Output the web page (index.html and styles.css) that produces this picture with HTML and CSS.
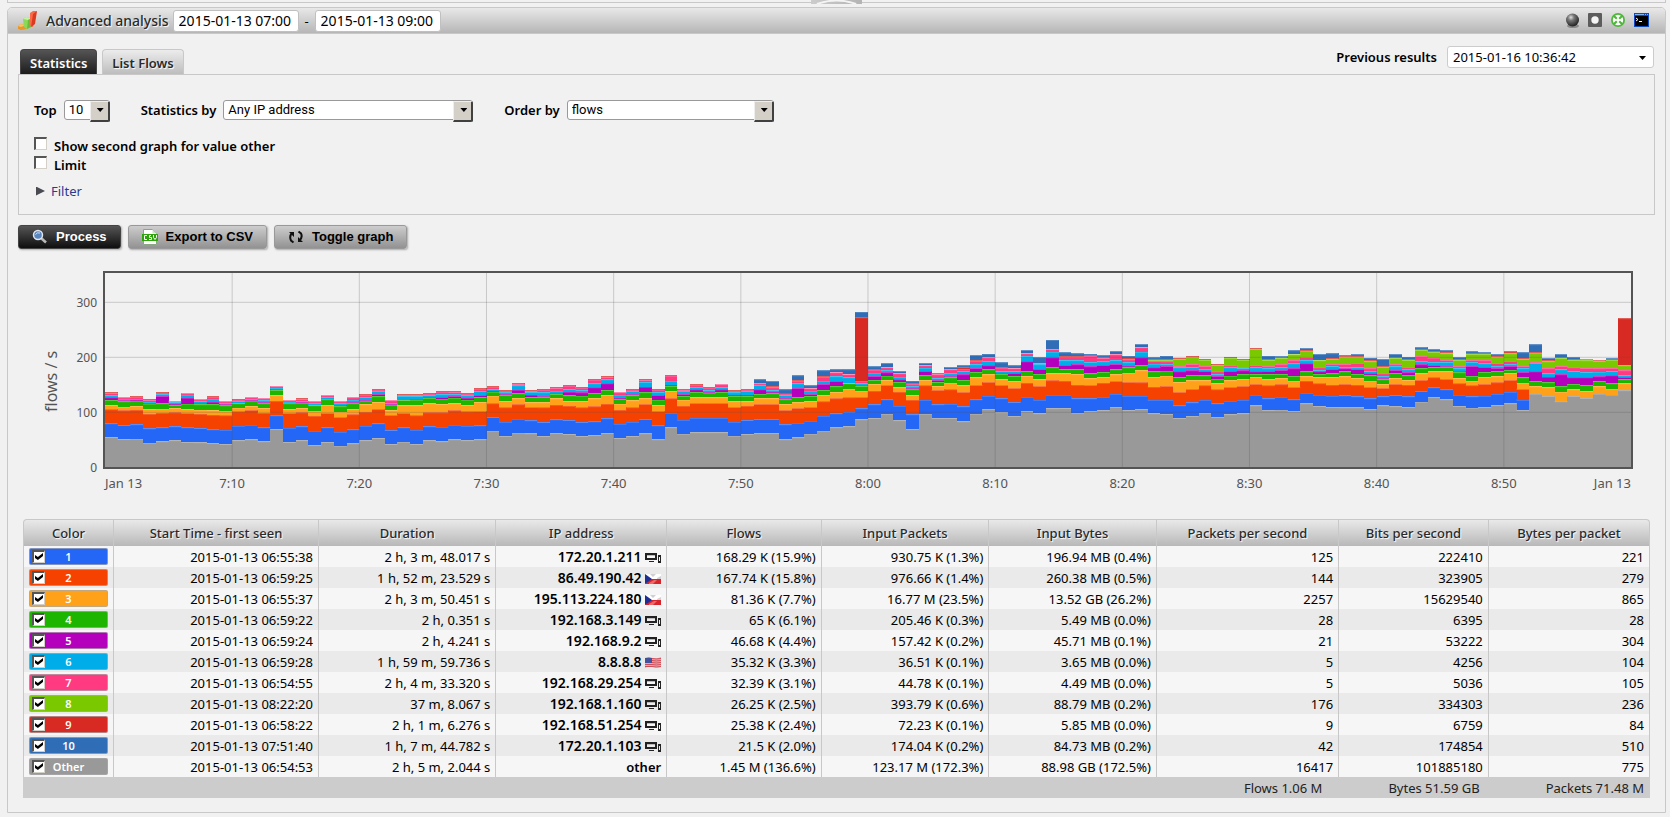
FILE: index.html
```html
<!DOCTYPE html>
<html lang="en">
<head>
<meta charset="utf-8">
<title>Advanced analysis</title>
<link rel="stylesheet" href="styles.css">
</head>
<body>
<svg class="sprite" aria-hidden="true">
  <symbol id="i-host" viewBox="0 0 16 11">
    <path fill="#222" fill-rule="evenodd" d="M0 1h12v7H0zM2 3v3h8V3zM4 9h5v1H4zM13 3h3v8h-3zM14 5v4h1V5z"/>
    <path fill="#bbb" d="M2 3h8v1H2z"/>
  </symbol>
  <symbol id="i-cz" viewBox="0 0 16 11">
    <path fill="#fff" d="M0 1h16v5H0z"/><path fill="#cfcfd4" d="M5 1h6l-3 3zM12 5l4-2v3h-4z"/>
    <path fill="#d8242b" d="M5 6h11v5H0z"/><path fill="#ee6a6a" d="M4 10l5-3h3l-4 4H4z"/>
    <path fill="#1c2f94" d="M0 1l7 5-7 5z"/>
  </symbol>
  <symbol id="i-us" viewBox="0 0 16 11">
    <path fill="#e9a9ae" d="M0 1q4-1 8 0t8-1v10q-4 1-8 0T0 11z"/>
    <path stroke="#cf4d58" fill="none" d="M7 1.500q4 1 9 0M7 3.500q4 1 9 0M7 5.500q4 1 9 0M0 7.500h7q4 1 9 0M0 9.500h7q4 1 9 0"/>
    <path fill="#42529d" d="M0 1q4-1 7 0v5H0z"/>
  </symbol>
</svg>

<div class="upper"><button class="handle" aria-label="Collapse"><svg viewBox="0 0 52 4"><path d="M6 4Q26-3 46 4" fill="none" stroke="#f4f4f4" stroke-width="2"/></svg></button></div>

<main class="window">
  <header class="titlebar">
    <svg class="logo" viewBox="0 0 20 20" aria-hidden="true">
      <path fill="#e9962a" d="M0 15l2-2 6 1 1 1v3l-6 1-3-1z"/><path fill="#f8c268" d="M0 15l2-2 6 1-5 2z"/>
      <path fill="#8cd95a" d="M5 8l3-2 6 1-1 9-4 2-3-2z"/><path fill="#c3f2a2" d="M5 8l3-2 6 1-4 2z"/><path fill="#6cbc3c" d="M10 9l4-2-1 9-4 2z"/>
      <path fill="#fa6a48" d="M12 2l3-2h4l-1 2-3 14-3-1z"/><path fill="#dc3a20" d="M15 3l4-3-2 13-4 3z"/>
    </svg>
    <h1>Advanced analysis</h1>
    <input class="date" type="text" value="2015-01-13 07:00" aria-label="From">
    <span class="dash">-</span>
    <input class="date" type="text" value="2015-01-13 09:00" aria-label="To">
    <nav class="tools">
      <button aria-label="Sphere"><svg viewBox="0 0 15 15"><defs><radialGradient id="ball" cx=".38" cy=".3" r=".7"><stop offset="0" stop-color="#ddd"/><stop offset=".35" stop-color="#777"/><stop offset="1" stop-color="#222"/></radialGradient></defs><ellipse cx="8" cy="13" rx="6" ry="2" fill="#888"/><circle cx="7.500" cy="7" r="6.500" fill="url(#ball)"/></svg></button>
      <button aria-label="Record"><svg viewBox="0 0 15 15"><rect x="0" y="0" width="14" height="14" rx="1" fill="#5c5c5c"/><circle cx="7" cy="7" r="3.700" fill="#f4f4f4"/></svg></button>
      <button aria-label="Target"><svg viewBox="0 0 15 15"><circle cx="7" cy="7" r="7" fill="#4fb83c"/><circle cx="7" cy="7" r="5.200" fill="#fff"/><path d="M3 3l2.800 2.800M11 3l-2.800 2.800M3 11l2.800-2.800M11 11l-2.800-2.800" stroke="#4fb83c" stroke-width="2.200"/></svg></button>
      <button aria-label="Console"><svg viewBox="0 0 15 15"><path fill="#0c4bc4" d="M0 0h15v14H0z"/><path fill="#7db4f5" d="M1 1h9v1H1zM11 1h1v1h-1zM13 1h1v1h-1z"/><path fill="#000" d="M1 3h13v10H1z"/><path d="M2 5l2 1.500L2 8M5 8.500h3" fill="none" stroke="#fff"/></svg></button>
    </nav>
  </header>

  <div class="content">
    <div class="topline">
      <div class="tabs" role="tablist">
        <button class="tab active" role="tab" aria-selected="true">Statistics</button>
        <button class="tab" role="tab" aria-selected="false">List Flows</button>
      </div>
      <div class="previous">
        <label for="prev">Previous results</label>
        <span class="pick flat"><select id="prev"><option>2015-01-16 10:36:42</option></select></span>
      </div>
    </div>

    <form class="options">
      <div class="fields">
        <label for="top">Top</label>
        <span class="pick w-top"><select id="top"><option>10</option></select></span>
        <label for="by">Statistics by</label>
        <span class="pick w-by"><select id="by"><option>Any IP address</option></select></span>
        <label for="order">Order by</label>
        <span class="pick w-order"><select id="order"><option>flows</option></select></span>
      </div>
      <label class="check"><input type="checkbox" class="box">Show second graph for value other</label>
      <label class="check"><input type="checkbox" class="box">Limit</label>
      <a class="filter" href="#filter">Filter</a>
    </form>

    <div class="actions">
      <button class="btn dark"><svg viewBox="0 0 16 16"><path d="M9 9l5 4.500" stroke="#b9b9b9" stroke-width="2.600"/><circle cx="6" cy="6" r="4.500" fill="#5b86bd" stroke="#dfe6ee" stroke-width="1.500"/><path d="M3.500 5.500Q5 3 8 4" stroke="#cfe2f8" fill="none"/></svg>Process</button>
      <button class="btn"><svg viewBox="0 0 16 16"><path fill="#fff" stroke="#8aa583" d="M1.500.5h9l4 4v11h-13z"/><path fill="#cfe3c8" d="M10.500.5v4h4z"/><path fill="#2fa40f" d="M0 5h16v7H0z"/><path fill="none" stroke="#fff" d="M5 6.500H2.500v4H5M9 6.500H7.500v2h2v2H7M11.500 6v2.500l1.500 2 1.500-2V6"/></svg>Export to CSV</button>
      <button class="btn"><svg viewBox="0 0 16 16"><path fill="none" stroke="#111" stroke-width="2" d="M4 4Q1 7.500 3 11.500L5.500 13.500M11 12Q15 8.500 13 4.500L10.500 2.500"/><path fill="#111" d="M1 3h5v5zM15 13h-5V8z"/></svg>Toggle graph</button>
    </div>

    <section class="chart" aria-label="Flows per second">
      <div class="ylabel">flows / s</div>
      <div class="yaxis"><span>300</span><span>200</span><span>100</span><span>0</span></div>
      <svg class="plot" id="plot" viewBox="0 39 120 582" preserveAspectRatio="none"></svg>
      <div class="xaxis"><span>Jan 13</span><span>7:10</span><span>7:20</span><span>7:30</span><span>7:40</span><span>7:50</span><span>8:00</span><span>8:10</span><span>8:20</span><span>8:30</span><span>8:40</span><span>8:50</span><span>Jan 13</span></div>
    </section>

    <table class="stats">
      <colgroup><col class="c1"><col class="c2"><col class="c3"><col class="c4"><col class="c5"><col class="c6"><col class="c7"><col class="c8"><col class="c9"><col class="c10"></colgroup>
      <thead><tr><th>Color</th><th>Start Time - first seen</th><th>Duration</th><th>IP address</th><th>Flows</th><th>Input Packets</th><th>Input Bytes</th><th>Packets per second</th><th>Bits per second</th><th>Bytes per packet</th></tr></thead>
      <tbody>
        <tr><td><label class="chip s1"><input type="checkbox" class="box" checked><span>1</span></label></td><td>2015-01-13 06:55:38</td><td>2 h, 3 m, 48.017 s</td><td class="ip">172.20.1.211 <svg><use href="#i-host"/></svg></td><td>168.29 K (15.9%)</td><td>930.75 K (1.3%)</td><td>196.94 MB (0.4%)</td><td>125</td><td>222410</td><td>221</td></tr>
        <tr><td><label class="chip s2"><input type="checkbox" class="box" checked><span>2</span></label></td><td>2015-01-13 06:59:25</td><td>1 h, 52 m, 23.529 s</td><td class="ip">86.49.190.42 <svg><use href="#i-cz"/></svg></td><td>167.74 K (15.8%)</td><td>976.66 K (1.4%)</td><td>260.38 MB (0.5%)</td><td>144</td><td>323905</td><td>279</td></tr>
        <tr><td><label class="chip s3"><input type="checkbox" class="box" checked><span>3</span></label></td><td>2015-01-13 06:55:37</td><td>2 h, 3 m, 50.451 s</td><td class="ip">195.113.224.180 <svg><use href="#i-cz"/></svg></td><td>81.36 K (7.7%)</td><td>16.77 M (23.5%)</td><td>13.52 GB (26.2%)</td><td>2257</td><td>15629540</td><td>865</td></tr>
        <tr><td><label class="chip s4"><input type="checkbox" class="box" checked><span>4</span></label></td><td>2015-01-13 06:59:22</td><td>2 h, 0.351 s</td><td class="ip">192.168.3.149 <svg><use href="#i-host"/></svg></td><td>65 K (6.1%)</td><td>205.46 K (0.3%)</td><td>5.49 MB (0.0%)</td><td>28</td><td>6395</td><td>28</td></tr>
        <tr><td><label class="chip s5"><input type="checkbox" class="box" checked><span>5</span></label></td><td>2015-01-13 06:59:24</td><td>2 h, 4.241 s</td><td class="ip">192.168.9.2 <svg><use href="#i-host"/></svg></td><td>46.68 K (4.4%)</td><td>157.42 K (0.2%)</td><td>45.71 MB (0.1%)</td><td>21</td><td>53222</td><td>304</td></tr>
        <tr><td><label class="chip s6"><input type="checkbox" class="box" checked><span>6</span></label></td><td>2015-01-13 06:59:28</td><td>1 h, 59 m, 59.736 s</td><td class="ip">8.8.8.8 <svg><use href="#i-us"/></svg></td><td>35.32 K (3.3%)</td><td>36.51 K (0.1%)</td><td>3.65 MB (0.0%)</td><td>5</td><td>4256</td><td>104</td></tr>
        <tr><td><label class="chip s7"><input type="checkbox" class="box" checked><span>7</span></label></td><td>2015-01-13 06:54:55</td><td>2 h, 4 m, 33.320 s</td><td class="ip">192.168.29.254 <svg><use href="#i-host"/></svg></td><td>32.39 K (3.1%)</td><td>44.78 K (0.1%)</td><td>4.49 MB (0.0%)</td><td>5</td><td>5036</td><td>105</td></tr>
        <tr><td><label class="chip s8"><input type="checkbox" class="box" checked><span>8</span></label></td><td>2015-01-13 08:22:20</td><td>37 m, 8.067 s</td><td class="ip">192.168.1.160 <svg><use href="#i-host"/></svg></td><td>26.25 K (2.5%)</td><td>393.79 K (0.6%)</td><td>88.79 MB (0.2%)</td><td>176</td><td>334303</td><td>236</td></tr>
        <tr><td><label class="chip s9"><input type="checkbox" class="box" checked><span>9</span></label></td><td>2015-01-13 06:58:22</td><td>2 h, 1 m, 6.276 s</td><td class="ip">192.168.51.254 <svg><use href="#i-host"/></svg></td><td>25.38 K (2.4%)</td><td>72.23 K (0.1%)</td><td>5.85 MB (0.0%)</td><td>9</td><td>6759</td><td>84</td></tr>
        <tr><td><label class="chip s10"><input type="checkbox" class="box" checked><span>10</span></label></td><td>2015-01-13 07:51:40</td><td>1 h, 7 m, 44.782 s</td><td class="ip">172.20.1.103 <svg><use href="#i-host"/></svg></td><td>21.5 K (2.0%)</td><td>174.04 K (0.2%)</td><td>84.73 MB (0.2%)</td><td>42</td><td>174854</td><td>510</td></tr>
        <tr><td><label class="chip s0"><input type="checkbox" class="box" checked><span>Other</span></label></td><td>2015-01-13 06:54:53</td><td>2 h, 5 m, 2.044 s</td><td class="other">other</td><td>1.45 M (136.6%)</td><td>123.17 M (172.3%)</td><td>88.98 GB (172.5%)</td><td>16417</td><td>101885180</td><td>775</td></tr>
      </tbody>
      <tfoot><tr><td colspan="10"><div class="totals"><span>Flows 1.06 M</span><span>Bytes 51.59 GB</span><span>Packets 71.48 M</span></div></td></tr></tfoot>
    </table>
  </div>
</main>
<script src="chart.js"></script>
</body>
</html>
```
FILE: styles.css
```css
* { box-sizing: border-box; }
body { margin: 0; background: #f1f1f1; color: #000; font: 13px/18px "Noto Sans", "Open Sans", sans-serif; }
button, input, select { font: inherit; color: inherit; margin: 0; }
button { border: 0; padding: 0; background: none; cursor: pointer; }
svg { display: block; }
.sprite { width: 0; height: 0; position: absolute; }

.upper { height: 3px; margin: 0 4px 4px 7px; border: solid #c8c8c8; border-width: 0 1px 1px; display: flex; justify-content: center; }
.handle { width: 51px; height: 4px; background: linear-gradient(90deg, #ccc, #b4b4b4); overflow: hidden; }
.handle svg { width: 51px; height: 4px; }

.window { margin: 0 4px 3px 7px; border: 1px solid #c8c8c8; border-radius: 5px 5px 0 0; }
.titlebar { display: flex; align-items: center; height: 26px; padding: 0 16px 0 10px; border-bottom: 1px solid #c8c8c8; border-radius: 4px 4px 0 0; background: linear-gradient(#e8e8e8, #b6b6b6); }
.logo { width: 20px; height: 20px; margin-right: 8px; }
h1 { margin: 0 4px 0 0; font-size: 14px; font-weight: 500; color: #2a2a2a; text-shadow: 1px 1px 1px #fff; }
.date { width: 126px; height: 22px; padding: 0 5px; border: 1px solid #c0c0c0; border-radius: 3px; background: #fff; font-size: 14px; }
.dash { width: 16px; text-align: center; }
.tools { display: flex; gap: 8px; margin-left: auto; }
.tools svg { width: 15px; height: 15px; }

.content { padding: 12px 10px 14px; }
.topline { display: flex; justify-content: space-between; align-items: flex-start; }
.tabs { display: flex; gap: 5px; padding: 3px 0 0 2px; }
.tab { height: 25px; padding: 1px 9px 0; border: 1px solid #c8c8c8; border-bottom: 0; border-radius: 4px 4px 0 0; background: linear-gradient(#ececec, #bdbdbd); color: #2a2a2a; font-size: 13px; font-weight: 600; text-shadow: 1px 1px 1px #fff; }
.tab.active { background: linear-gradient(#555, #1c1c1c); border-color: #444; color: #fff; text-shadow: none; }
.previous { display: flex; align-items: center; gap: 10px; padding-right: 1px; font-weight: 600; }

.pick { position: relative; display: inline-flex; }
.pick select { appearance: none; width: 100%; height: 20px; padding: 0 24px 0 4px; border: 1px solid #999; border-radius: 3px; background: #fff; font: 13px/18px Roboto, sans-serif; }
.pick::before { content: ""; position: absolute; right: 0; top: 1px; width: 17px; height: 18px; background: #d4d0c8; border: solid; border-width: 1px 2px 2px 1px; border-color: #eee #404040 #404040 #eee; border-radius: 0 2px 2px 0; pointer-events: none; }
.pick::after { content: ""; position: absolute; right: 6px; top: 8px; width: 7px; height: 4px; background: #000; clip-path: polygon(0 0, 100% 0, 50% 100%); pointer-events: none; }
.pick.flat { width: 207px; }
.pick.flat select { height: 22px; padding-left: 5px; border-color: #ccc; font: 13px/20px "Noto Sans", sans-serif; }
.pick.flat::before { display: none; }
.pick.flat::after { right: 8px; top: 10px; }

.options { display: flex; flex-direction: column; align-items: flex-start; height: 141px; padding: 25px 15px 0; border: 1px solid #c8c8c8; font-weight: 600; }
.fields { display: flex; align-items: center; gap: 7px; margin-bottom: 16px; }
.w-top { width: 46px; margin-right: 24px; }
.w-by { width: 250px; margin-right: 24px; }
.w-order { width: 207px; }
.check { display: flex; align-items: center; gap: 7px; height: 19px; }
.filter { display: flex; align-items: center; gap: 6px; margin: 8px 0 0 2px; color: #2b3a8f; font-weight: 400; text-decoration: none; }
.filter::before { content: ""; width: 9px; height: 9px; background: #4a4a52; clip-path: polygon(0 0, 100% 50%, 0 100%); }

.box { appearance: none; flex: none; width: 13px; height: 13px; border: solid; border-width: 2px 1px 1px 2px; border-color: #555 #d4d0c8 #d4d0c8 #555; background: #fff; }
.check .box { margin-bottom: 4px; }
.box:checked::after { content: ""; display: block; width: 8px; height: 7px; margin: 1px; background: #000; clip-path: polygon(0 28%, 36% 58%, 100% 0, 100% 42%, 36% 100%, 0 70%); }

.actions { display: flex; gap: 7px; padding: 10px 0 0; }
.btn { display: flex; align-items: center; gap: 8px; height: 24px; padding: 0 13px; border: 1px solid #999; border-radius: 3px; background: linear-gradient(#cdcdcd, #929292); box-shadow: 1px 1px 2px #aaa; font: bold 13px/18px "Liberation Sans", Arial, sans-serif; }
.btn svg { width: 16px; height: 16px; }
.btn.dark { border-color: #444; background: linear-gradient(#555, #0e0e0e); color: #fff; }

.chart { display: grid; grid-template-columns: 36px 49px 1fr; padding: 22px 22px 0 0; color: #545454; font-size: 12px; line-height: 16px; }
.ylabel { writing-mode: vertical-rl; transform: rotate(180deg); justify-self: end; font-size: 16px; text-align: center; padding-bottom: 22px; margin-right: -5px; }
.yaxis { display: flex; flex-direction: column; justify-content: space-between; height: 181px; margin: 24px 0 -7px; padding-right: 6px; text-align: right; }
.plot { width: 100%; height: 198px; border: 2px solid #545454; }
.xaxis { grid-column: 3; display: grid; grid-template-columns: repeat(24, minmax(0, 1fr)); padding: 6px 2px 0; font-size: 13px; text-align: center; white-space: nowrap; }
.xaxis span { grid-column: span 2; }
.xaxis span:first-child { grid-column: span 1; text-align: left; }
.xaxis span:last-child { grid-column: span 1; text-align: right; }

.stats { width: calc(100% - 10px); margin: 28px 0 0 5px; table-layout: fixed; border-collapse: separate; border-spacing: 0; }
.c1 { width: 91px; } .c2 { width: 12.600%; } .c3 { width: 10.900%; } .c4 { width: 10.500%; } .c5 { width: 9.500%; }
.c6 { width: 10.300%; } .c7 { width: 10.300%; } .c8 { width: 11.200%; } .c9 { width: 9.200%; }
th { height: 27px; padding: 0; border: solid #c8c8c8; border-width: 1px 1px 0 0; background: linear-gradient(#e9e9e9, #b8b8b8); color: #2a2a2a; font-weight: 500; text-shadow: 1px 1px 1px #fff; }
th:first-child { border-left-width: 1px; border-top-left-radius: 4px; }
th:last-child { border-top-right-radius: 4px; }
tbody td { height: 21px; padding: 0 5px; border-right: 1px solid #c8c8c8; text-align: right; white-space: nowrap; background: #f6f6f6; }
tbody td:first-child { border-left: 1px solid #c8c8c8; }
tbody tr:nth-child(even) td { background: #eaeaea; }
td.ip { font-size: 14px; font-weight: 600; }
td.ip svg { display: inline-block; width: 16px; height: 11px; vertical-align: -1px; }
td.other { font-weight: 600; }
.chip { display: flex; align-items: center; height: 17px; padding-left: 2px; border: 1px solid rgba(170, 170, 170, .7); border-radius: 2px; color: #fff; font-size: 11px; font-weight: 600; line-height: 15px; }
.chip span { width: 47px; text-align: center; }
.s0 { background: #999; } .s1 { background: #2466f5; } .s2 { background: #f64200; } .s3 { background: #ffa21a; }
.s4 { background: #1eb500; } .s5 { background: #b400bd; } .s6 { background: #00ade8; } .s7 { background: #ff3a80; }
.s8 { background: #7ac900; } .s9 { background: #d82a22; } .s10 { background: #2f6eb7; }
tfoot td { height: 21px; padding: 0 6px; background: #ccc; color: #222; }
.totals { display: flex; justify-content: flex-end; gap: 66px; }
```
FILE: chart.js
```js
// One row per minute: upper edge of each stacked series in plot units.
// Order: other, 1..7, then optionally 8, 9 and 10.
const rows = `531 490 448 435 420 412 406 399
537 495 451 440 424 420 416 412
536 493 449 438 422 419 416 410
548 505 461 447 431 429 425 420
544 502 458 446 430 408 402 398
541 499 457 444 435 431 427 424
546 502 459 447 431 413 404 400
547 504 461 449 433 430 423 418
549 508 464 450 433 425 416 410
552 509 466 452 436 432 429 424
541 497 454 443 430 428 423 419
538 494 450 438 422 420 417 412
544 502 458 444 430 426 421 415
507 466 422 406 390 388 383 379
546 503 459 447 430 430 425 421
541 499 457 444 428 427 423 417
555 512 467 452 436 434 430 424
546 502 459 435 418 418 411 406
557 515 471 455 439 435 430 424
550 508 463 447 430 426 419 412
541 497 455 433 422 420 411 404
534 490 447 426 409 402 393 389
552 510 465 450 434 433 429 421
545 502 459 436 420 419 408 405
552 509 466 436 419 418 408 405
541 499 457 430 414 411 405 401
544 500 457 432 416 411 403 395
538 494 451 430 413 408 402 396
541 497 454 435 419 413 406 401
538 496 453 426 411 405 393 386
512 471 430 407 395 392 387 380
528 485 442 423 405 402 397 392
518 476 433 415 400 389 376 372
520 481 441 427 411 404 396 393
528 486 442 427 411 408 397 389
519 478 434 415 402 400 392 384
522 480 437 423 406 395 387 377
528 486 442 423 407 397 390 383
525 484 439 415 399 382 370 359
519 475 431 405 390 370 358 351
534 491 449 431 417 413 404 397
528 485 442 421 406 403 393 389
520 477 432 415 397 380 366 360
538 496 453 435 419 405 396 389
502 458 415 393 378 374 362 347
521 479 437 419 408 402 393 390
517 473 429 412 396 388 381 374
517 473 429 412 398 396 390 383
517 473 429 412 396 388 382 373
527 485 441 424 408 404 397 392
522 480 437 424 408 404 393 389
519 477 432 415 402 388 375 370 370 368 358
519 477 432 415 400 395 390 382 382 378 363
538 493 450 432 418 414 405 401 401 398 388
532 488 444 427 411 384 370 362 362 360 346
521 482 441 423 408 402 392 385 385 384 376
512 467 424 405 390 372 362 350 350 348 331
502 460 415 396 379 363 349 337 337 336 328
499 455 412 386 370 369 352 343 343 342 328
478 445 411 392 378 376 370 362 362 172 155
474 433 392 372 360 348 338 329 329 327 319
461 418 375 360 347 337 331 322 322 321 309
481 437 395 382 366 358 350 340 340 339 333
507 463 419 405 388 384 379 371 371 370 362
461 419 376 360 346 333 323 316 316 315 309
474 433 390 378 366 360 354 343 343 341 339
474 431 388 368 352 349 340 328 328 326 321
484 439 396 376 360 343 333 326 326 322 316
461 418 375 352 336 324 313 302 302 300 285
447 407 366 343 328 316 303 292 292 291 281
457 415 375 358 342 339 333 323 323 321 307
468 426 384 363 348 339 333 325 325 324 316
453 410 368 348 333 304 289 280 280 279 270
460 419 378 358 342 327 313 309 309 308 291
445 404 361 340 322 292 275 267 267 266 239
444 404 362 340 327 315 301 290 290 288 277
458 415 374 342 327 313 301 290 290 288 280
454 415 375 355 340 319 306 287 287 286 281
451 410 368 351 336 315 304 294 294 292 286
441 401 363 343 328 312 301 283 283 282 273
450 407 366 338 322 317 307 298 298 293 287
447 407 367 331 316 292 275 262 262 261 252
460 419 380 351 334 322 311 303 300 298 292
462 419 378 347 332 318 312 304 300 298 287
474 436 396 366 351 334 322 318 297 294 294
468 427 387 361 345 331 321 312 291 288 288
458 419 376 361 346 333 328 318 300 297 297
471 430 388 370 356 348 343 334 315 312 312
463 422 381 361 347 333 322 316 294 291 291
460 419 378 357 343 331 324 322 300 297 297
436 404 372 351 343 334 322 315 267 264 264
450 415 376 358 342 333 325 319 300 298 287
449 410 373 355 342 330 322 313 294 292 288
453 418 381 362 348 325 310 301 283 282 271
430 398 362 349 334 310 301 291 272 270 264
438 404 370 351 343 334 330 322 301 299 282
441 407 374 351 340 327 318 312 297 294 280
442 406 372 349 334 325 322 312 291 289 286
442 409 374 354 342 327 322 309 291 289 283
447 415 381 362 346 340 333 325 304 300 293
436 409 384 372 358 355 348 340 321 318 297
439 405 372 354 339 330 319 313 294 292 282
441 409 374 360 346 337 328 322 300 298 290
425 393 360 340 325 313 304 289 270 268 262
411 382 352 334 321 315 306 293 276 274 267
418 388 357 334 321 318 306 300 280 277 271
438 404 370 354 337 333 325 319 300 298 291
443 409 376 362 348 318 306 300 282 280 274
441 407 372 351 336 321 310 301 282 280 276
435 401 367 349 333 324 318 309 291 289 283
430 395 360 339 330 318 312 303 280 275 273
450 419 387 368 352 336 325 318 297 294 277
401 401 401 379 363 334 309 306 278 276 253
408 408 408 382 367 350 340 325 304 300 294
424 424 424 395 379 343 328 318 294 292 282
408 408 408 388 372 352 333 322 300 298 291
414 414 414 393 375 352 336 324 301 298 297
401 401 401 379 363 349 335 325 303 300 299
404 404 404 386 370 346 333 324 300 297 294
391 391 391 370 358 351 346 331 316 175 175`.split("\n").map(line => line.split(" ").map(Number));

const colors = ["#999999", "#2466f5", "#f64200", "#ffa21a", "#1eb500", "#b400bd", "#00ade8", "#ff3a80", "#7ac900", "#d82a22", "#2f6eb7"];
const parts = [];
const path = (d, attrs) => parts.push(`<path d="${d}" ${attrs}/>`);

colors.forEach((color, s) => {
  let fill = "";
  let edge = "";
  rows.forEach((row, i) => {
    if (row.length === 8) row.push(row[7], row[7] - 2, row[7] - 2);
    const bottom = s ? row[s - 1] : 622;
    if (bottom <= row[s]) return;
    fill += `M${i} ${bottom}V${row[s]}h1V${bottom}z`;
    edge += `M${i} ${row[s] + 1}h1`;
  });
  path(fill, `fill="${color}" shape-rendering="crispEdges"`);
  path(edge, `fill="none" stroke="#fff" stroke-opacity=".3" vector-effect="non-scaling-stroke" shape-rendering="crispEdges"`);
});

let grid = "";
for (let x = 10; x < 120; x += 10) grid += `M${x} 39V621`;
for (const y of [127, 292, 457]) grid += `M0 ${y}H120`;
path(grid, `fill="none" stroke="#545454" stroke-opacity=".25" vector-effect="non-scaling-stroke" shape-rendering="crispEdges"`);
document.getElementById("plot").innerHTML = parts.join("");
```
